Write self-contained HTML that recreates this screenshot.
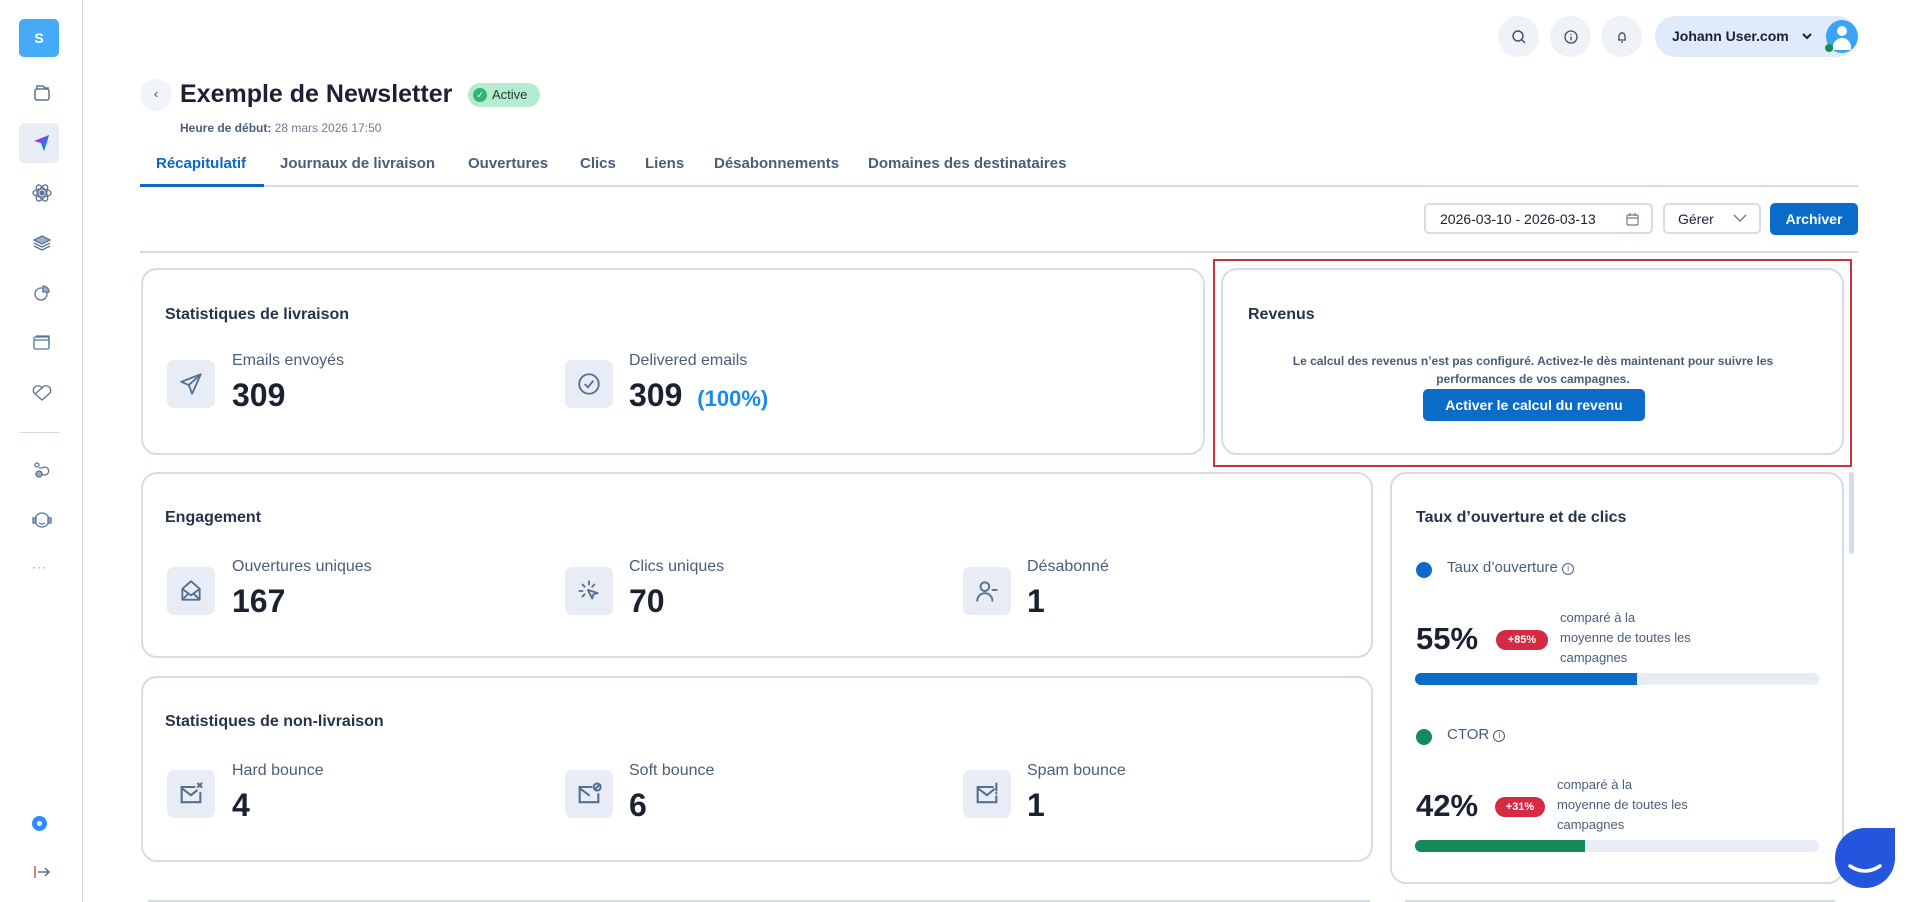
<!DOCTYPE html>
<html><head><meta charset="utf-8"><style>
*{box-sizing:border-box;margin:0;padding:0}
body{width:1907px;height:902px;overflow:hidden;background:#fff;font-family:"Liberation Sans",sans-serif;color:#1e2433;position:relative}
.a{position:absolute}
.side{left:0;top:0;width:83px;height:902px;border-right:1px solid #d3dce8;background:#fff}
.si{position:absolute;left:27px;width:30px;height:30px}
.card{position:absolute;border:2px solid #d3dce8;border-radius:16px;background:#fff}
.ct{position:absolute;left:22px;font-weight:bold;font-size:16px;color:#26344a}
.ib{position:absolute;width:48px;height:48px;background:#e8edf5;border-radius:7px;display:flex;align-items:center;justify-content:center}
.lb{position:absolute;font-size:16px;color:#4a5d7a;white-space:nowrap}
.num{position:absolute;font-size:32px;font-weight:bold;color:#1b2130}
.tab{position:absolute;top:155px;font-size:15px;font-weight:bold;color:#4a5d7a;white-space:nowrap}
.hc{position:absolute;top:16px;width:41px;height:41px;border-radius:50%;background:#eff2f7;display:flex;align-items:center;justify-content:center}
</style></head><body>
<div class="a side">
 <div class="a" style="left:19px;top:19px;width:40px;height:38px;border-radius:5px;background:#45aaf8;color:#fff;font-weight:bold;font-size:14px;display:flex;align-items:center;justify-content:center">S</div>
 <svg class="si" style="top:78px" viewBox="0 0 30 30" fill="none" stroke="#5a7596" stroke-width="1.5"><rect x="8" y="11" width="14" height="11" rx="2"/><path d="M10 11V8h6l2 2h3v2"/></svg>
 <div class="a" style="left:19px;top:123px;width:40px;height:40px;border-radius:6px;background:#e8edf5"></div>
 <svg class="si" style="top:128px" viewBox="0 0 30 30"><path d="M7 13L22 7 17 23 14 15z" fill="#8b3ff0"/><path d="M14 15L22 7 17 23z" fill="#1b7df0"/></svg>
 <svg class="si" style="top:178px" viewBox="0 0 30 30" fill="none" stroke="#5a7596" stroke-width="1.3"><ellipse cx="15" cy="15" rx="9" ry="4"/><ellipse cx="15" cy="15" rx="9" ry="4" transform="rotate(60 15 15)"/><ellipse cx="15" cy="15" rx="9" ry="4" transform="rotate(120 15 15)"/><circle cx="15" cy="15" r="2" fill="#5a7596"/></svg>
 <svg class="si" style="top:228px" viewBox="0 0 30 30" fill="none" stroke="#5a7596" stroke-width="1.3"><path d="M15 8l8 4-8 4-8-4z" fill="#9db0c8"/><path d="M7 15l8 4 8-4M7 18l8 4 8-4"/></svg>
 <svg class="si" style="top:278px" viewBox="0 0 30 30" fill="none" stroke="#5a7596" stroke-width="1.3"><circle cx="14" cy="16" r="6"/><path d="M16 8a6 6 0 0 1 6 6h-6z" fill="#9db0c8"/></svg>
 <svg class="si" style="top:328px" viewBox="0 0 30 30" fill="none" stroke="#5a7596" stroke-width="1.3"><rect x="7" y="9" width="15" height="12" rx="1.5"/><path d="M7 12h15M9 8h13v10"/></svg>
 <svg class="si" style="top:378px" viewBox="0 0 30 30" fill="none" stroke="#5a7596" stroke-width="1.3"><path d="M15 22L7 15a4 4 0 0 1 8-5 4 4 0 0 1 8 5z"/><path d="M8 16l8-7" /></svg>
 <div class="a" style="left:19px;top:432px;width:40px;height:1px;background:#d3dce8"></div>
 <svg class="si" style="top:455px" viewBox="0 0 30 30" fill="none" stroke="#5a7596" stroke-width="1.3"><circle cx="10" cy="10" r="2"/><circle cx="12" cy="19" r="3" fill="#9db0c8"/><path d="M15 19a4 4 0 1 0 0-6h-3"/></svg>
 <svg class="si" style="top:505px" viewBox="0 0 30 30" fill="none" stroke="#5a7596" stroke-width="1.3"><circle cx="15" cy="15" r="7"/><rect x="6" y="13" width="3" height="5" fill="#9db0c8"/><rect x="21" y="13" width="3" height="5" fill="#9db0c8"/><path d="M12 18q3 2 6 0"/></svg>
 <div class="a" style="left:32px;top:560px;font-size:12px;color:#7d93b0;letter-spacing:1px">···</div>
 <div class="a" style="left:32px;top:816px;width:15px;height:15px;border-radius:50%;background:#2a8ef5;border:3px solid #2a8ef5"><div style="width:5px;height:5px;margin:2px;background:#fff;border-radius:50%"></div></div>
 <svg class="si" style="top:857px" viewBox="0 0 30 30" fill="none" stroke="#5a7596" stroke-width="1.6"><path d="M8 9v12" stroke="#e06060"/><path d="M11 15h11M18 11l4 4-4 4"/></svg>
</div>

<div class="hc" style="left:1498px"><svg width="16" height="16" viewBox="0 0 16 16" fill="none" stroke="#3d4f69" stroke-width="1.4"><circle cx="7" cy="7" r="5"/><path d="M11 11l3 3"/></svg></div>
<div class="hc" style="left:1550px"><svg width="16" height="16" viewBox="0 0 16 16" fill="none" stroke="#3d4f69" stroke-width="1.3"><circle cx="8" cy="8" r="6"/><path d="M8 5v1M8 7.5v4"/></svg></div>
<div class="hc" style="left:1601px"><svg width="16" height="16" viewBox="0 0 16 16" fill="none" stroke="#3d4f69" stroke-width="1.3"><path d="M5 11V7a3 3 0 0 1 6 0v4zM4 11h8M7 13h2M8 3v1"/></svg></div>
<div class="a" style="left:1655px;top:16px;width:202px;height:41px;border-radius:21px;background:#dfeafa"></div>
<div class="a" style="left:1672px;top:28px;font-size:14px;font-weight:bold;color:#1b2130">Johann User.com</div>
<svg class="a" style="left:1801px;top:31px" width="12" height="10" viewBox="0 0 12 10" fill="none" stroke="#1b2130" stroke-width="2"><path d="M2 3l4 4 4-4"/></svg>
<div class="a" style="left:1826px;top:20px;width:32px;height:33px;border-radius:50%;background:#3aa4f8;overflow:hidden"><div style="position:absolute;left:11px;top:6px;width:10px;height:10px;border-radius:50%;background:#fff"></div><div style="position:absolute;left:7px;top:18px;width:18px;height:12px;border-radius:9px 9px 0 0;background:#fff"></div></div>
<div class="a" style="left:1825px;top:44px;width:8px;height:8px;border-radius:50%;background:#148a55"></div>

<div class="a" style="left:140px;top:79px;width:32px;height:32px;border-radius:50%;background:#f1f4f8;font-size:13px;color:#3d4f69;text-align:center;line-height:30px">‹</div>
<div class="a" style="left:180px;top:80px;font-size:25px;font-weight:bold;color:#1b2130;white-space:nowrap">Exemple de Newsletter</div>
<div class="a" style="left:468px;top:83px;width:72px;height:24px;border-radius:12px;background:#b5ecd0;font-size:13px;color:#1e3a2c;padding-left:24px;line-height:24px">Active<div style="position:absolute;left:5px;top:5px;width:14px;height:14px;border-radius:50%;background:#2fb874;color:#fff;font-size:9px;line-height:14px;text-align:center">✓</div></div>
<div class="a" style="left:180px;top:121px;font-size:12px;color:#6a7b92"><b style="color:#4a5d7a">Heure de début:</b> 28 mars 2026 17:50</div>

<div class="tab" style="left:156px;color:#0b68c4">Récapitulatif</div>
<div class="tab" style="left:280px">Journaux de livraison</div>
<div class="tab" style="left:468px">Ouvertures</div>
<div class="tab" style="left:580px">Clics</div>
<div class="tab" style="left:645px">Liens</div>
<div class="tab" style="left:714px">Désabonnements</div>
<div class="tab" style="left:868px">Domaines des destinataires</div>
<div class="a" style="left:140px;top:185px;width:1718px;height:2px;background:#d3dce8"></div>
<div class="a" style="left:140px;top:184px;width:124px;height:3px;background:#0b68c4"></div>

<div class="a" style="left:1424px;top:203px;width:229px;height:31px;border:2px solid #d3dce8;border-radius:5px;font-size:14px;color:#1b2130;padding:6px 0 0 14px">2026-03-10 - 2026-03-13
<svg style="position:absolute;right:12px;top:8px" width="13" height="13" viewBox="0 0 13 13" fill="none" stroke="#6a7b92" stroke-width="1.2"><rect x="1" y="2" width="11" height="10" rx="1"/><path d="M1 5h11M4 0v3M9 0v3"/></svg></div>
<div class="a" style="left:1663px;top:203px;width:98px;height:31px;border:2px solid #d3dce8;border-radius:5px;font-size:14px;color:#1b2130;padding:6px 0 0 13px">Gérer
<svg style="position:absolute;right:12px;top:9px" width="14" height="9" viewBox="0 0 14 9" fill="none" stroke="#6a7b92" stroke-width="1.4"><path d="M1 1l6 6 6-6"/></svg></div>
<div class="a" style="left:1770px;top:203px;width:88px;height:32px;border-radius:5px;background:#0b6bc9;color:#fff;font-size:14px;font-weight:bold;text-align:center;line-height:32px">Archiver</div>
<div class="a" style="left:140px;top:251px;width:1718px;height:2px;background:#d3dce8"></div>

<!-- card 1 -->
<div class="card" style="left:141px;top:268px;width:1064px;height:187px">
 <div class="ct" style="top:36px">Statistiques de livraison</div>
 <div class="ib" style="left:24px;top:90px"><svg width="26" height="26" viewBox="0 0 24 24" fill="none" stroke="#55708f" stroke-width="1.7" stroke-linejoin="round"><path d="M21 3L3 10l7 3 3 8z"/><path d="M10 13l11-10"/></svg></div>
 <div class="lb" style="left:89px;top:82px">Emails envoyés</div>
 <div class="num" style="left:89px;top:107px">309</div>
 <div class="ib" style="left:422px;top:90px"><svg width="26" height="26" viewBox="0 0 24 24" fill="none" stroke="#55708f" stroke-width="1.7"><circle cx="12" cy="12" r="9"/><path d="M8 12l3 3 5-6"/></svg></div>
 <div class="lb" style="left:486px;top:82px">Delivered emails</div>
 <div class="num" style="left:486px;top:107px">309 <span style="font-size:22px;color:#1a8ae8;margin-left:6px">(100%)</span></div>
</div>

<!-- revenus -->
<div class="a" style="left:1213px;top:259px;width:639px;height:208px;border:2px solid #c8333e"></div>
<div class="card" style="left:1221px;top:268px;width:623px;height:187px">
 <div class="ct" style="left:25px;top:36px">Revenus</div>
 <div class="a" style="left:30px;top:82px;width:560px;text-align:center;font-size:12px;font-weight:bold;color:#4a5d7a;line-height:18px">Le calcul des revenus n’est pas configuré. Activez-le dès maintenant pour suivre les performances de vos campagnes.</div>
 <div class="a" style="left:200px;top:119px;width:222px;height:32px;border-radius:5px;background:#0b6bc9;color:#fff;font-size:14px;font-weight:bold;text-align:center;line-height:32px;white-space:nowrap">Activer le calcul du revenu</div>
</div>

<!-- engagement -->
<div class="card" style="left:141px;top:472px;width:1232px;height:186px">
 <div class="ct" style="top:35px">Engagement</div>
 <div class="ib" style="left:24px;top:93px"><svg width="26" height="26" viewBox="0 0 24 24" fill="none" stroke="#55708f" stroke-width="1.7" stroke-linejoin="round"><path d="M4 10l8-7 8 7v10H4z"/><path d="M4 20l6-6M20 20l-6-6M4 10l8 6 8-6"/></svg></div>
 <div class="lb" style="left:89px;top:84px">Ouvertures uniques</div>
 <div class="num" style="left:89px;top:109px">167</div>
 <div class="ib" style="left:422px;top:93px"><svg width="26" height="26" viewBox="0 0 24 24" fill="none" stroke="#55708f" stroke-width="1.7" stroke-linecap="round"><path d="M12 3v3M6 6l2 2M17 6l-2 2M3 12h3M6 17l2-2"/><path d="M11 11l9 3-4 1-1 4z" stroke-linejoin="round"/></svg></div>
 <div class="lb" style="left:486px;top:84px">Clics uniques</div>
 <div class="num" style="left:486px;top:109px">70</div>
 <div class="ib" style="left:820px;top:93px"><svg width="26" height="26" viewBox="0 0 24 24" fill="none" stroke="#55708f" stroke-width="1.8" stroke-linecap="round"><circle cx="10" cy="8" r="4"/><path d="M3 21a7 7 0 0 1 14 0M17 11h4"/></svg></div>
 <div class="lb" style="left:884px;top:84px">Désabonné</div>
 <div class="num" style="left:884px;top:109px">1</div>
</div>

<!-- non-livraison -->
<div class="card" style="left:141px;top:676px;width:1232px;height:186px">
 <div class="ct" style="top:35px">Statistiques de non-livraison</div>
 <div class="ib" style="left:24px;top:92px"><svg width="28" height="28" viewBox="0 0 24 24" fill="none" stroke="#55708f" stroke-width="1.8" stroke-linecap="round"><path d="M15 6H4v13h16v-8"/><path d="M4 7l8 6 5-4M18 3l3 3M21 3l-3 3"/></svg></div>
 <div class="lb" style="left:89px;top:84px">Hard bounce</div>
 <div class="num" style="left:89px;top:109px">4</div>
 <div class="ib" style="left:422px;top:92px"><svg width="28" height="28" viewBox="0 0 24 24" fill="none" stroke="#55708f" stroke-width="1.8" stroke-linecap="round"><path d="M14 6H4v13h16v-7"/><path d="M4 7l8 6"/><circle cx="19" cy="6" r="3"/><path d="M17 8l4-4"/></svg></div>
 <div class="lb" style="left:486px;top:84px">Soft bounce</div>
 <div class="num" style="left:486px;top:109px">6</div>
 <div class="ib" style="left:820px;top:92px"><svg width="28" height="28" viewBox="0 0 24 24" fill="none" stroke="#55708f" stroke-width="1.8" stroke-linecap="round"><path d="M17 6H4v13h16v-5"/><path d="M4 7l8 6 6-5M20 3v6M20 11v.5"/></svg></div>
 <div class="lb" style="left:884px;top:84px">Spam bounce</div>
 <div class="num" style="left:884px;top:109px">1</div>
</div>

<!-- taux -->
<div class="card" style="left:1390px;top:472px;width:454px;height:412px">
 <div class="ct" style="left:24px;top:35px">Taux d’ouverture et de clics</div>
 <div class="a" style="left:24px;top:88px;width:16px;height:16px;border-radius:50%;background:#0b6bc9"></div>
 <div class="lb" style="left:55px;top:85px;font-size:15px">Taux d’ouverture <span style="display:inline-block;width:12px;height:12px;border:1.3px solid #4a5d7a;border-radius:50%;font-size:8px;text-align:center;line-height:10px;vertical-align:1px">i</span></div>
 <div class="num" style="left:24px;top:147px;font-size:31px">55%</div>
 <div class="a" style="left:104px;top:156px;width:52px;height:20px;border-radius:10px;background:#d42a44;color:#fff;font-size:11px;font-weight:bold;text-align:center;line-height:20px">+85%</div>
 <div class="lb" style="left:168px;top:134px;font-size:13px;line-height:20px">comparé à la<br>moyenne de toutes les<br>campagnes</div>
 <div class="a" style="left:23px;top:199px;width:404px;height:12px;border-radius:6px;background:#e8edf5;overflow:hidden"><div style="width:222px;height:12px;background:#0b6bc9"></div></div>
 <div class="a" style="left:24px;top:255px;width:16px;height:16px;border-radius:50%;background:#138a58"></div>
 <div class="lb" style="left:55px;top:252px;font-size:15px">CTOR <span style="display:inline-block;width:12px;height:12px;border:1.3px solid #4a5d7a;border-radius:50%;font-size:8px;text-align:center;line-height:10px;vertical-align:1px">i</span></div>
 <div class="num" style="left:24px;top:314px;font-size:31px">42%</div>
 <div class="a" style="left:103px;top:323px;width:50px;height:20px;border-radius:10px;background:#d42a44;color:#fff;font-size:11px;font-weight:bold;text-align:center;line-height:20px">+31%</div>
 <div class="lb" style="left:165px;top:301px;font-size:13px;line-height:20px">comparé à la<br>moyenne de toutes les<br>campagnes</div>
 <div class="a" style="left:23px;top:366px;width:404px;height:12px;border-radius:6px;background:#e8edf5;overflow:hidden"><div style="width:170px;height:12px;background:#138a58"></div></div>
</div>
<div class="a" style="left:1849px;top:472px;width:5px;height:82px;border-radius:3px;background:#d3dce8"></div>

<div class="a" style="left:148px;top:900px;width:1222px;height:2px;background:#d3dce8"></div>
<div class="a" style="left:1405px;top:900px;width:430px;height:2px;background:#d3dce8"></div>

<div class="a" style="left:1835px;top:828px;width:60px;height:60px;border-radius:50% 0 50% 50%;background:#2455dc"></div>
<svg class="a" style="left:1845px;top:860px" width="40" height="20" viewBox="0 0 40 20" fill="none" stroke="#fff" stroke-width="3.5" stroke-linecap="round"><path d="M5 6q15 10 30 0"/></svg>
</body></html>
